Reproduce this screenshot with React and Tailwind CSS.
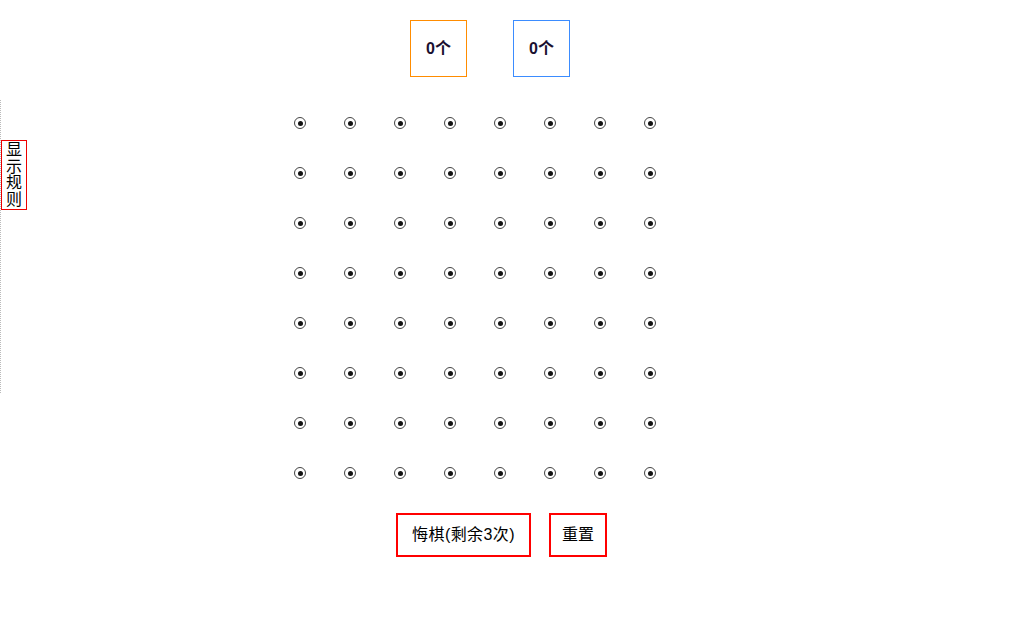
import React from 'react';

const Dot = () => (
  <div className="flex items-center justify-center w-[50px] h-[50px]">
    <div className="w-[12px] h-[12px] rounded-full border border-[#444] flex items-center justify-center">
      <div className="w-[5px] h-[5px] rounded-full bg-[#111]" />
    </div>
  </div>
);

export default function App() {
  const cells = Array.from({ length: 64 });
  return (
    <div
      className="relative w-[1029px] h-[635px] bg-white text-black"
      style={{ fontFamily: '"Liberation Sans", "Noto Sans CJK SC", sans-serif' }}
    >
      {/* rule sidebar */}
      <div className="absolute left-0 top-[100px] h-[293px] border-l border-dotted border-[#bbb]" />
      <div className="absolute left-[1px] top-[140px] w-[26px] h-[70px] border border-[#e00] flex flex-col items-center justify-center text-[16px] leading-[16.5px]">
        <span>显</span>
        <span>示</span>
        <span>规</span>
        <span>则</span>
      </div>

      <div className="flex flex-col">
        {/* score boxes */}
        <div className="flex gap-[46px] pl-[410px] pt-[20px]">
          <div className="w-[57px] h-[57px] border border-[#ff8c00] flex items-center justify-center text-[16px] font-semibold text-[#1a1030]">
            0个
          </div>
          <div className="w-[57px] h-[57px] border border-[#3b8cff] flex items-center justify-center text-[16px] font-semibold text-[#1a1030]">
            0个
          </div>
        </div>

        {/* board */}
        <div className="grid grid-cols-8 w-[400px] ml-[275px] mt-[21px]">
          {cells.map((_, i) => (
            <Dot key={i} />
          ))}
        </div>

        {/* buttons */}
        <div className="flex gap-[18px] pl-[396px] mt-[15px]">
          <button className="h-[44px] w-[135px] border-2 border-[#f00] text-[16px] tracking-[0.4px] bg-white">
            悔棋(剩余3次)
          </button>
          <button className="h-[44px] w-[58px] border-2 border-[#f00] text-[16px] bg-white">
            重置
          </button>
        </div>
      </div>
    </div>
  );
}
